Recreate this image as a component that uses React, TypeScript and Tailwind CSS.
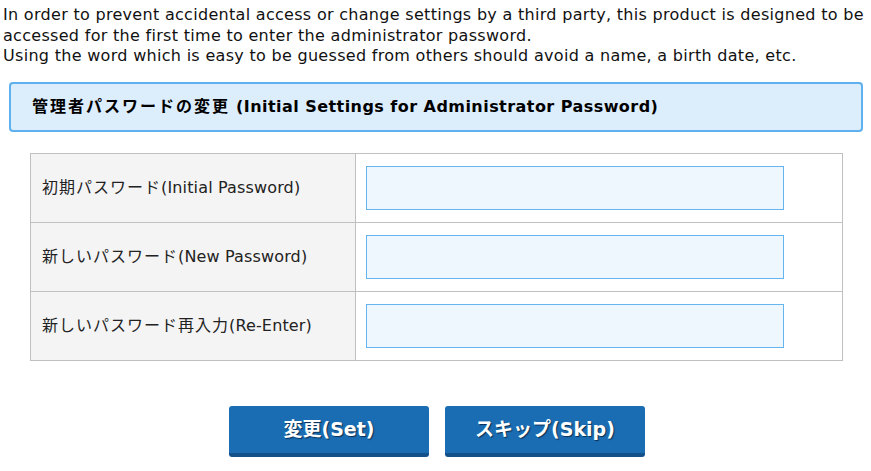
const FONT = '[font-family:"DejaVu_Sans","Noto_Sans_CJK_JP",sans-serif]'

const ROWS = [
  { ja: '初期パスワード', en: '(Initial Password)' },
  { ja: '新しいパスワード', en: '(New Password)' },
  { ja: '新しいパスワード再入力', en: '(Re-Enter)' },
]

export default function App() {
  return (
    <div className={`w-[871px] h-[471px] bg-white text-[#111] ${FONT} overflow-hidden`}>
      <p className="pl-[3px] pt-[5px] text-[16px] leading-[20.5px] whitespace-nowrap tracking-[0.3px]">
        In order to prevent accidental access or change settings by a third party, this product is designed to be
        <br />
        accessed for the first time to enter the administrator password.
        <br />
        Using the word which is easy to be guessed from others should avoid a name, a birth date, etc.
      </p>

      <div className="mt-[15.5px] ml-[9px] w-[854px] h-[50px] border-2 border-[#5eb0ee] bg-[#dcedfc] rounded-[4px] flex items-center pl-[21px]">
        <h1 className="text-[16px] font-bold text-black whitespace-nowrap">
          <span className="tracking-[2px]">管理者パスワードの変更</span>
          <span className="tracking-[0.45px]"> (Initial Settings for Administrator Password)</span>
        </h1>
      </div>

      <table className="mt-[21px] ml-[30px] w-[813px] border-collapse border border-[#c0c0c0]">
        <tbody>
          {ROWS.map(r => (
            <tr key={r.en} className="h-[69px]">
              <td className="w-[325px] bg-[#f4f4f4] border border-[#c0c0c0] pl-[11px] text-[16px] text-[#222] whitespace-nowrap">
                <span className="tracking-[1px]">{r.ja}</span>
                <span className="tracking-[0.15px]">{r.en}</span>
              </td>
              <td className="border border-[#c0c0c0] pl-[10px]">
                <input
                  type="password"
                  className="block w-[418px] h-[44px] border border-[#64b4f0] bg-[#eef6fe] outline-none px-2"
                />
              </td>
            </tr>
          ))}
        </tbody>
      </table>

      <div className="mt-[45px] flex justify-center gap-4 pl-[3px]">
        {['変更(Set)', 'スキップ(Skip)'].map(t => (
          <button
            key={t}
            className="w-[200px] h-[51px] rounded-[3px] bg-[#1a6db3] border-b-[4px] border-[#14508a] text-white text-[19px] font-bold [text-shadow:1px_1px_1px_#0a2f55]"
          >
            {t}
          </button>
        ))}
      </div>
    </div>
  )
}
